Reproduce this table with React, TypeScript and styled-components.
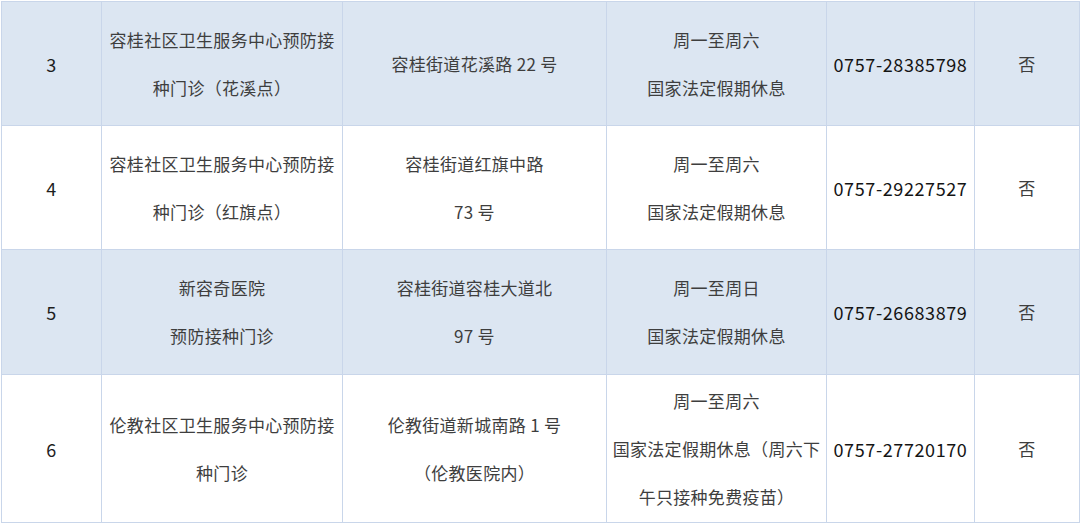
import styled, { createGlobalStyle } from "styled-components";

const GlobalStyle = createGlobalStyle`
  html, body {
    margin: 0;
    padding: 0;
    background: #ffffff;
  }
  body {
    font-family: "Noto Sans CJK SC", "Noto Sans", sans-serif;
    color: #3e3e3e;
  }
`;

const Wrapper = styled.div`
  padding: 1px 1px 0 1px;
  width: 1078px;
`;

const Table = styled.table`
  width: 1078px;
  border-collapse: collapse;
  table-layout: fixed;
`;

const Row = styled.tr<{ $shaded: boolean; $height: number }>`
  height: ${(p) => p.$height}px;
  background: ${(p) => (p.$shaded ? "#dce6f2" : "#ffffff")};
`;

const Cell = styled.td`
  border: 1px solid #c9d6ea;
  text-align: center;
  vertical-align: middle;
  padding: 0 4px;
  font-size: 17px;
  line-height: 48px;
  letter-spacing: 0.3px;
`;

const PhoneCell = styled(Cell)`
  color: #141414;
  font-size: 18px;
  font-weight: 400;
  letter-spacing: 0.6px;
  padding: 0 2px;
`;

const NumCell = styled(Cell)`
  color: #1e1e1e;
  font-size: 18px;
`;

const Line = styled.div`
  white-space: nowrap;
`;

type Entry = {
  no: string;
  name: string[];
  addr: string[];
  hours: string[];
  phone: string;
  free: string;
  height: number;
};

const rows: Entry[] = [
  {
    no: "3",
    name: ["容桂社区卫生服务中心预防接", "种门诊（花溪点）"],
    addr: ["容桂街道花溪路 22 号"],
    hours: ["周一至周六", "国家法定假期休息"],
    phone: "0757-28385798",
    free: "否",
    height: 124,
  },
  {
    no: "4",
    name: ["容桂社区卫生服务中心预防接", "种门诊（红旗点）"],
    addr: ["容桂街道红旗中路", "73 号"],
    hours: ["周一至周六", "国家法定假期休息"],
    phone: "0757-29227527",
    free: "否",
    height: 124,
  },
  {
    no: "5",
    name: ["新容奇医院", "预防接种门诊"],
    addr: ["容桂街道容桂大道北", "97 号"],
    hours: ["周一至周日", "国家法定假期休息"],
    phone: "0757-26683879",
    free: "否",
    height: 125,
  },
  {
    no: "6",
    name: ["伦教社区卫生服务中心预防接", "种门诊"],
    addr: ["伦教街道新城南路 1 号", "（伦教医院内）"],
    hours: ["周一至周六", "国家法定假期休息（周六下", "午只接种免费疫苗）"],
    phone: "0757-27720170",
    free: "否",
    height: 148,
  },
];

const widths = [100, 241, 264, 220, 148, 105];

const Lines = ({ items }: { items: string[] }) => (
  <>
    {items.map((t) => (
      <Line key={t}>{t}</Line>
    ))}
  </>
);

const App = () => {
  return (
    <>
      <GlobalStyle />
      <Wrapper>
        <Table>
          <colgroup>
            {widths.map((w, i) => (
              <col key={i} style={{ width: w }} />
            ))}
          </colgroup>
          <tbody>
            {rows.map((r, i) => (
              <Row key={r.no} $shaded={i % 2 === 0} $height={r.height}>
                <NumCell>{r.no}</NumCell>
                <Cell>
                  <Lines items={r.name} />
                </Cell>
                <Cell>
                  <Lines items={r.addr} />
                </Cell>
                <Cell>
                  <Lines items={r.hours} />
                </Cell>
                <PhoneCell>{r.phone}</PhoneCell>
                <Cell>{r.free}</Cell>
              </Row>
            ))}
          </tbody>
        </Table>
      </Wrapper>
    </>
  );
};

export default App;
